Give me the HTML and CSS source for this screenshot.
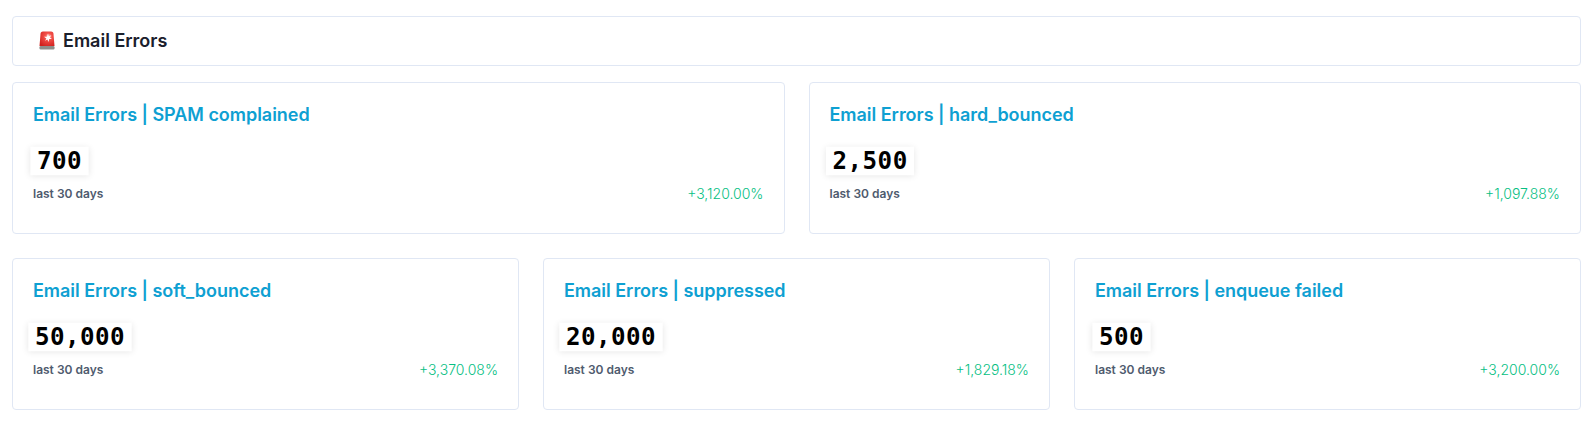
FILE: index.html
```html
<!DOCTYPE html>
<html>
<head>
	<title>Email Errors</title>
	<link rel="stylesheet" href="styles.css">
</head>
<body>
	<div class="page">
		<div class="section-head">
			<svg class="siren" viewBox="0 0 16 19" width="16" height="19">
				<defs>
					<radialGradient id="glow" cx="0.6" cy="0.35" r="0.75">
						<stop offset="0" stop-color="#ffd9d2"/>
						<stop offset="0.3" stop-color="#f4514a"/>
						<stop offset="1" stop-color="#cf1f1c"/>
					</radialGradient>
				</defs>
				<path d="M1.5 3 Q1.5 0.5 4 0.5 H12 Q14.5 0.5 14.5 3 L15.5 15 H0.5 Z" fill="url(#glow)"/>
				<path d="M9 2.5 L9.7 5.4 L12.4 4.2 L10.7 6.6 L13 8 L10.2 8.1 L9.6 11 L8.4 8.6 L6 9.8 L7.4 7.4 L5 5.8 L8 5.8 Z" fill="#fff"/>
				<rect x="0.5" y="15" width="15" height="3.5" rx="1.2" fill="#8f8f8b"/>
			</svg>
			<span>Email Errors</span>
		</div>

		<div class="row row-2">
			<div class="card">
				<h3 class="card-title">Email Errors | SPAM complained</h3>
				<div class="value-wrap"><span class="value">700</span></div>
				<div class="card-foot">
					<span class="period">last 30 days</span>
					<span class="trend">+3,120.00%</span>
				</div>
			</div>
			<div class="card">
				<h3 class="card-title">Email Errors | hard_bounced</h3>
				<div class="value-wrap"><span class="value">2,500</span></div>
				<div class="card-foot">
					<span class="period">last 30 days</span>
					<span class="trend">+1,097.88%</span>
				</div>
			</div>
		</div>

		<div class="row row-3">
			<div class="card">
				<h3 class="card-title">Email Errors | soft_bounced</h3>
				<div class="value-wrap"><span class="value">50,000</span></div>
				<div class="card-foot">
					<span class="period">last 30 days</span>
					<span class="trend">+3,370.08%</span>
				</div>
			</div>
			<div class="card">
				<h3 class="card-title">Email Errors | suppressed</h3>
				<div class="value-wrap"><span class="value">20,000</span></div>
				<div class="card-foot">
					<span class="period">last 30 days</span>
					<span class="trend">+1,829.18%</span>
				</div>
			</div>
			<div class="card">
				<h3 class="card-title">Email Errors | enqueue failed</h3>
				<div class="value-wrap"><span class="value">500</span></div>
				<div class="card-foot">
					<span class="period">last 30 days</span>
					<span class="trend">+3,200.00%</span>
				</div>
			</div>
		</div>
	</div>
</body>
</html>
```

FILE: styles.css
```css
body {
	margin: 0;
	background-color: #fff;
	font-family: "Inter", "Liberation Sans", sans-serif;
}
.page {
	padding: 16px 14px 0 12px;
}
.section-head {
	display: flex;
	align-items: center;
	gap: 8px;
	height: 50px;
	box-sizing: border-box;
	padding-left: 26px;
	padding-bottom: 1px;
	border: 1px solid #e0e7f4;
	border-radius: 4px;
	font-size: 18px;
	font-weight: 600;
	color: #1a202c;
}
.row {
	display: grid;
	gap: 24px;
	margin-top: 16px;
}
.row + .row {
	margin-top: 24px;
}
.row-2 {
	grid-template-columns: 1fr 1fr;
}
.row-3 {
	grid-template-columns: 1fr 1fr 1fr;
}
.card {
	height: 152px;
	box-sizing: border-box;
	padding: 20px;
	border: 1px solid #e0e7f4;
	border-radius: 4px;
}
.card-title {
	margin: 0;
	font-size: 18px;
	line-height: 24px;
	font-weight: 600;
	letter-spacing: -0.03px;
	color: #0ea0d2;
}
.value-wrap {
	display: flex;
	margin-top: 21px;
}
.value {
	padding: 0 6px;
	font-family: "DejaVu Sans Mono", "Liberation Mono", monospace;
	font-size: 22px;
	line-height: 26px;
	letter-spacing: 0.4px;
	font-weight: 700;
	color: #000;
	background-color: #fff;
	box-shadow: 0 1px 6px rgba(0, 0, 0, 0.1);
	transform: scale(1.1);
}
.card-foot {
	display: flex;
	justify-content: space-between;
	align-items: center;
	margin-top: 12px;
	font-size: 12px;
	line-height: 16px;
}
.period {
	font-weight: 600;
	color: #4f5b6e;
}
.trend {
	font-size: 14px;
	font-weight: 300;
	color: #06c083;
}
```
